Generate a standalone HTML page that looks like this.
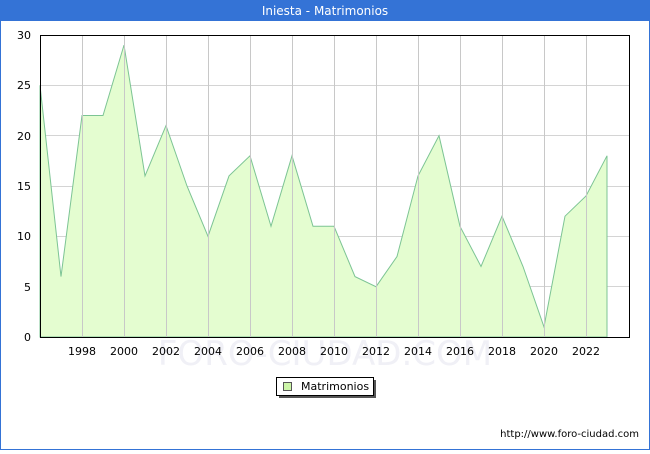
<!DOCTYPE html>
<html><head><style>
body{margin:0;width:650px;height:450px;overflow:hidden;font-family:"DejaVu Sans","Liberation Sans",sans-serif;}
</style></head><body>
<svg width="650" height="450" xmlns="http://www.w3.org/2000/svg" font-family="DejaVu Sans, Liberation Sans, sans-serif">
<rect x="0" y="0" width="650" height="450" fill="#fff"/>
<rect x="0.5" y="0.5" width="649" height="449" fill="none" stroke="#3473d6" stroke-width="1"/>
<rect x="0" y="0" width="650" height="21" fill="#3473d6"/>
<text x="325" y="15" font-size="12" fill="#fff" text-anchor="middle">Iniesta - Matrimonios</text>
<g stroke="#d4d4d4" stroke-width="1">
<line x1="40" y1="286.5" x2="630" y2="286.5"/><line x1="40" y1="236.5" x2="630" y2="236.5"/>
<line x1="40" y1="186.5" x2="630" y2="186.5"/><line x1="40" y1="135.5" x2="630" y2="135.5"/>
<line x1="40" y1="85.5" x2="630" y2="85.5"/>
</g>
<text x="325" y="365" font-size="34" fill="#f0f0f6" text-anchor="middle">FORO-CIUDAD.COM</text>
<polygon fill="#e4fdd0" stroke="#7cc494" stroke-width="1" points="40,337 40,85.3 61,276.6 82,115.5 103,115.5 124,45.1 145,175.9 166,125.6 187,186 208,236.3 229,175.9 250,155.8 271,226.3 292,155.8 313,226.3 334,226.3 355,276.6 376,286.7 397,256.5 418,175.9 439,135.7 460,226.3 481,266.5 502,216.2 523,266.5 544,326.9 565,216.2 586,196 607,155.8 607,337"/>
<g stroke="#c8c8c8" stroke-width="1">
<line x1="82.5" y1="35" x2="82.5" y2="337"/><line x1="124.5" y1="35" x2="124.5" y2="337"/>
<line x1="166.5" y1="35" x2="166.5" y2="337"/><line x1="208.5" y1="35" x2="208.5" y2="337"/>
<line x1="250.5" y1="35" x2="250.5" y2="337"/><line x1="292.5" y1="35" x2="292.5" y2="337"/>
<line x1="334.5" y1="35" x2="334.5" y2="337"/><line x1="376.5" y1="35" x2="376.5" y2="337"/>
<line x1="418.5" y1="35" x2="418.5" y2="337"/><line x1="460.5" y1="35" x2="460.5" y2="337"/>
<line x1="502.5" y1="35" x2="502.5" y2="337"/><line x1="544.5" y1="35" x2="544.5" y2="337"/>
<line x1="586.5" y1="35" x2="586.5" y2="337"/>
</g>
<rect x="40.5" y="35.5" width="589" height="302" fill="none" stroke="#000" stroke-width="1"/>
<g font-size="11" fill="#000" text-anchor="end">
<text x="31" y="341">0</text><text x="31" y="291">5</text><text x="31" y="240">10</text>
<text x="31" y="190">15</text><text x="31" y="140">20</text><text x="31" y="89">25</text><text x="31" y="39">30</text>
</g>
<g font-size="11" fill="#000" text-anchor="middle">
<text x="82" y="355">1998</text><text x="124" y="355">2000</text><text x="166" y="355">2002</text>
<text x="208" y="355">2004</text><text x="250" y="355">2006</text><text x="292" y="355">2008</text>
<text x="334" y="355">2010</text><text x="376" y="355">2012</text><text x="418" y="355">2014</text>
<text x="460" y="355">2016</text><text x="502" y="355">2018</text><text x="544" y="355">2020</text>
<text x="586" y="355">2022</text>
</g>
<rect x="279" y="380" width="97" height="18" fill="#555"/>
<rect x="276.5" y="377.5" width="97" height="18" fill="#fff" stroke="#000"/>
<rect x="283.5" y="382.5" width="8" height="8" fill="#ccf5a8" stroke="#555"/>
<text x="301" y="390" font-size="11" fill="#000">Matrimonios</text>
<text x="639" y="437" font-size="10" fill="#000" text-anchor="end">http://www.foro-ciudad.com</text>
</svg>
</body></html>
